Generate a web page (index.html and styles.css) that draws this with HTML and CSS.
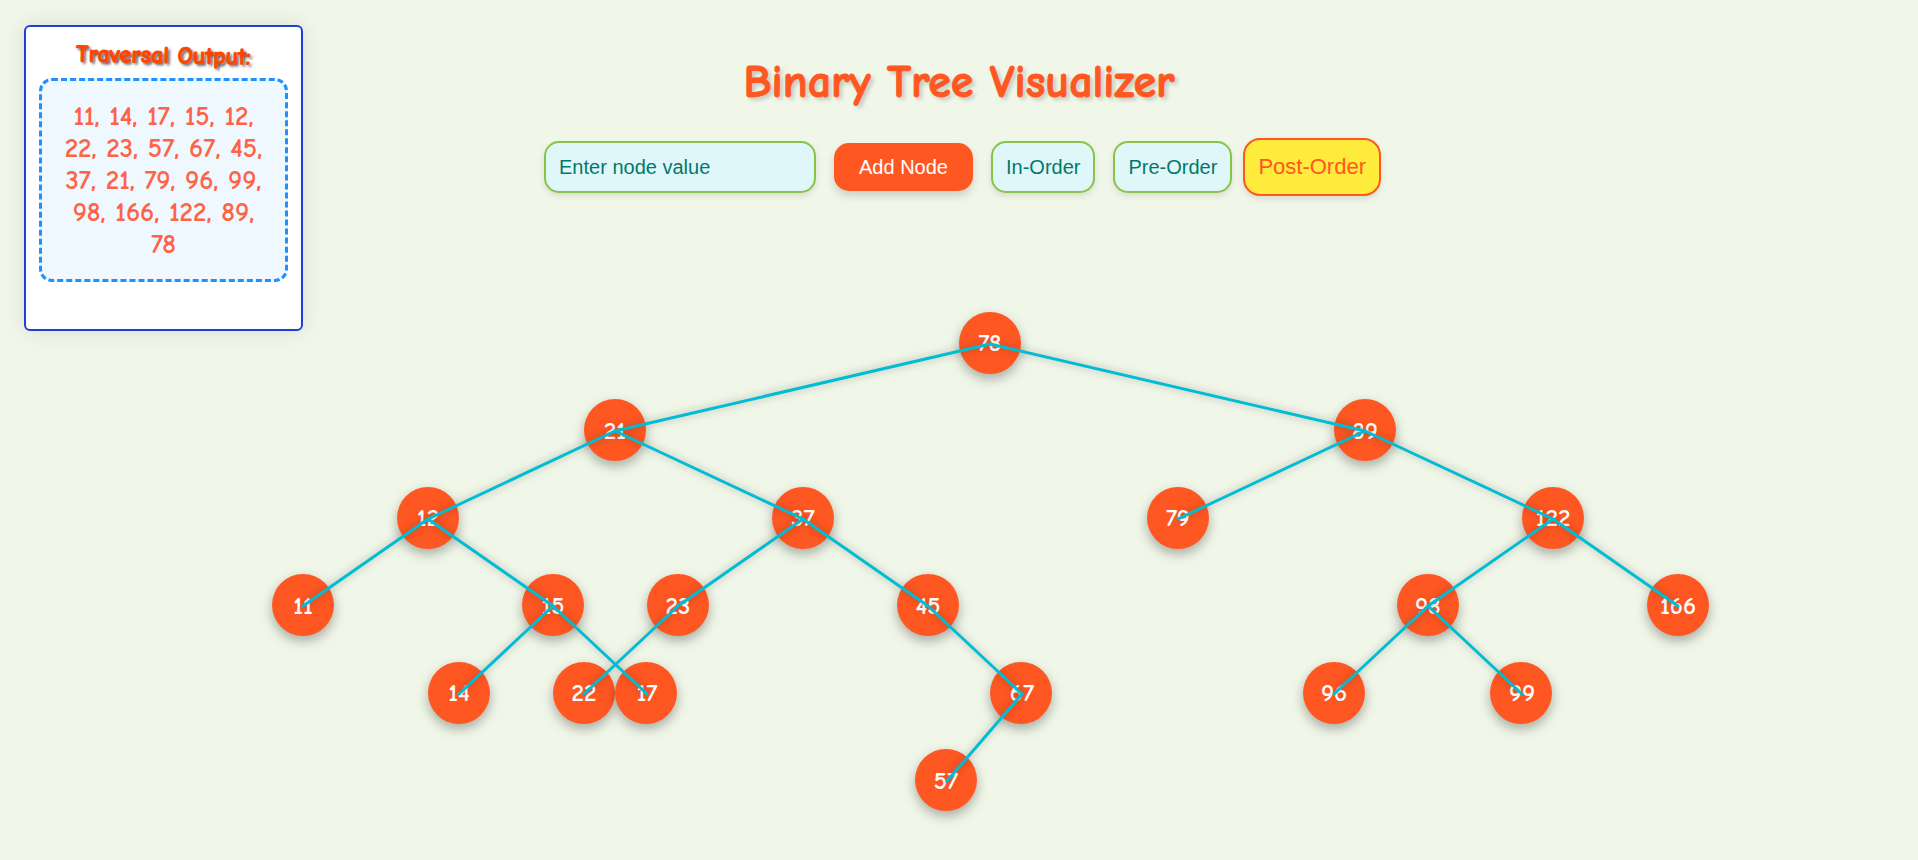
FILE: index.html
```html
<!DOCTYPE html>
<html lang="en">
<head>
<meta charset="utf-8">
<title>Binary Tree Visualizer</title>
<link rel="stylesheet" href="styles.css">
</head>
<body>
<aside class="output">
  <h2 class="output-title">Traversal Output:</h2>
  <p class="output-values">11, 14, 17, 15, 12, 22, 23, 57, 67, 45, 37, 21, 79, 96, 99, 98, 166, 122, 89, 78</p>
</aside>
<main class="page">
  <h1 class="title">Binary Tree Visualizer</h1>
  <form class="controls">
    <input class="field" type="text" placeholder="Enter node value" aria-label="Node value">
    <button class="add" type="button">Add Node</button>
    <button class="order" type="button">In-Order</button>
    <button class="order" type="button">Pre-Order</button>
    <button class="order active" type="button">Post-Order</button>
  </form>
  <svg class="tree" viewBox="0 0 1918 620" role="img" aria-label="Binary tree">
    <g class="nodes">
      <circle cx="990" cy="103" r="31"/><circle cx="615" cy="190" r="31"/><circle cx="1365" cy="190" r="31"/>
      <circle cx="428" cy="278" r="31"/><circle cx="803" cy="278" r="31"/><circle cx="1178" cy="278" r="31"/><circle cx="1553" cy="278" r="31"/>
      <circle cx="303" cy="365" r="31"/><circle cx="553" cy="365" r="31"/><circle cx="678" cy="365" r="31"/><circle cx="928" cy="365" r="31"/><circle cx="1428" cy="365" r="31"/><circle cx="1678" cy="365" r="31"/>
      <circle cx="459" cy="453" r="31"/><circle cx="584" cy="453" r="31"/><circle cx="646" cy="453" r="31"/><circle cx="1021" cy="453" r="31"/><circle cx="1334" cy="453" r="31"/><circle cx="1521" cy="453" r="31"/>
      <circle cx="946" cy="540" r="31"/>
    </g>
    <g class="labels">
      <text x="990" y="111">78</text><text x="615" y="199">21</text><text x="1365" y="199">89</text>
      <text x="428" y="286">12</text><text x="803" y="286">37</text><text x="1178" y="286">79</text><text x="1553" y="286">122</text>
      <text x="303" y="374">11</text><text x="553" y="374">15</text><text x="678" y="374">23</text><text x="928" y="374">45</text><text x="1428" y="374">98</text><text x="1678" y="374">166</text>
      <text x="459" y="461">14</text><text x="584" y="461">22</text><text x="647" y="461">17</text><text x="1022" y="461">67</text><text x="1334" y="461">96</text><text x="1522" y="461">99</text>
      <text x="946" y="549">57</text>
    </g>
    <g class="edges">
      <path d="M990 104L615 191"/><path d="M990 104L1365 191"/>
      <path d="M615 191L428 279"/><path d="M615 191L803 279"/><path d="M1365 191L1178 279"/><path d="M1365 191L1553 279"/>
      <path d="M428 279L303 366"/><path d="M428 279L553 366"/><path d="M803 279L678 366"/><path d="M803 279L928 366"/><path d="M1553 279L1428 366"/><path d="M1553 279L1678 366"/>
      <path d="M553 366L459 454"/><path d="M553 366L647 454"/><path d="M678 366L584 454"/><path d="M928 366L1022 454"/><path d="M1428 366L1334 454"/><path d="M1428 366L1522 454"/>
      <path d="M1022 454L947 541"/>
    </g>
  </svg>
</main>
</body>
</html>
```
FILE: styles.css
```css
* { box-sizing: border-box; }

body {
  margin: 0;
  background: #f0f6e8;
  font-family: "Comic Sans MS", "Comic Neue", Lato, sans-serif;
}

.page {
  display: flex;
  flex-direction: column;
  align-items: center;
}

.title {
  margin: 54px 0 0;
  font-size: 46px;
  line-height: 58px;
  color: #ff5722;
  -webkit-text-stroke: 1px #ff5722;
  text-shadow: 3px 3px 4px rgba(0, 0, 0, 0.2);
}

.controls {
  display: flex;
  align-items: center;
  gap: 18px;
  height: 58px;
  margin-top: 26px;
}

.field, .add, .order {
  height: 52px;
  padding: 0 13px;
  border: 2px solid #8bc34a;
  border-radius: 15px;
  background: #e0f7fa;
  color: #00796b;
  font: 20px "Liberation Sans", Arial, sans-serif;
  box-shadow: 0 3px 6px rgba(0, 0, 0, 0.1);
}

.field { width: 272px; }
.field::placeholder { color: #00796b; opacity: 1; }

.add {
  height: 48px;
  padding: 0 25px;
  border: 0;
  background: #ff5722;
  color: #fff;
  box-shadow: 0 5px 8px rgba(0, 0, 0, 0.15);
}

.order.active {
  height: 58px;
  margin: 0 -7px;
  padding: 0 13px;
  border-color: #ff5722;
  border-radius: 17px;
  background: #ffeb3b;
  color: #ff5722;
  font-size: 22px;
}

.tree {
  display: block;
  width: 100%;
  margin-top: 44px;
}

.nodes circle {
  fill: #ff5722;
  filter: drop-shadow(0 5px 6px rgba(0, 0, 0, 0.3));
}

.labels {
  fill: #fff;
  font-size: 25px;
  font-weight: bold;
  text-anchor: middle;
}

.edges {
  fill: none;
  stroke: #00bcd4;
  stroke-width: 3px;
  stroke-linecap: round;
  filter: drop-shadow(0 0 4px rgba(0, 0, 0, 0.3));
}

.output {
  position: absolute;
  top: 25px;
  left: 24px;
  width: 279px;
  min-height: 306px;
  padding: 13px;
  border: 2px solid #1f3fd6;
  border-radius: 6px;
  background: #fff;
  text-align: center;
  box-shadow: 0 0 20px rgba(0, 0, 0, 0.1);
}

.output-title {
  margin: 0 0 8px;
  font-size: 24px;
  line-height: 30px;
  color: #ff4500;
  -webkit-text-stroke: 1px #ff4500;
  text-shadow: 2px 2px 3px rgba(0, 0, 0, 0.8);
  transform: rotate(1deg);
}

.output-values {
  margin: 0;
  padding: 20px 22px 18px;
  border: 3px dashed #1e90ff;
  border-radius: 13px;
  background: #f0f8ff;
  color: #ff6347;
  font-size: 27px;
  font-weight: bold;
  line-height: 32px;
}
```
